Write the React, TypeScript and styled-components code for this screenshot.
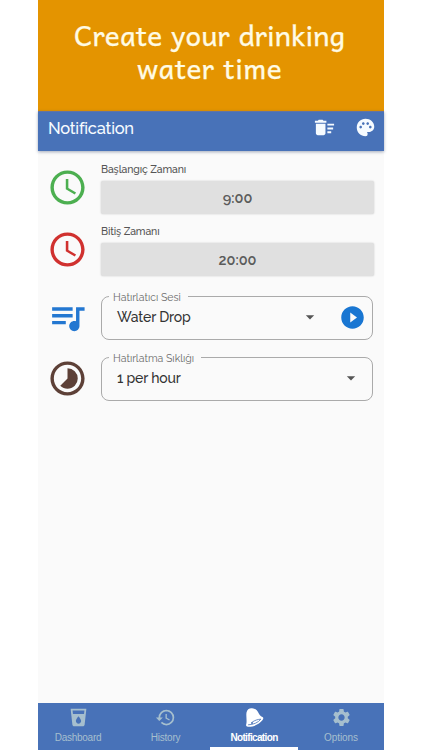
import React from "react";
import styled, { createGlobalStyle } from "styled-components";
import {
  MdAccessTime,
  MdArrowDropDown,
  MdDeleteSweep,
  MdHistory,
  MdLocalDrink,
  MdPalette,
  MdPlayCircleFilled,
  MdQueueMusic,
  MdSettings,
  MdTimelapse,
} from "react-icons/md";

const GlobalStyle = createGlobalStyle`
  * { box-sizing: border-box; }
  body { margin: 0; background: #fff; overflow: hidden; }
`;

const Phone = styled.div`
  width: 346px;
  height: 750px;
  margin-left: 38px;
  display: flex;
  flex-direction: column;
  background: #fafafa;
  font-family: Raleway, Lato, "Open Sans", sans-serif;
`;

const Banner = styled.h1`
  margin: 0;
  height: 111px;
  flex: none;
  padding: 18px 3px 0 0;
  background: #e49400;
  color: #fffbe4;
  font: 400 28px/33px Andika, "Noto Sans", sans-serif;
  -webkit-text-stroke: 0.25px #fffbe4;
  text-align: center;
  white-space: nowrap;
`;

const BannerLine = styled.span<{ $spacing: number }>`
  display: block;
  word-spacing: 1px;
  letter-spacing: ${(p) => p.$spacing}px;
`;

const AppBar = styled.header`
  height: 40px;
  flex: none;
  display: flex;
  align-items: center;
  padding: 0 8px 8px 10px;
  background: #4872b8;
  border-top: 1px solid #6674a0;
  box-shadow: 0 1px 3px rgba(30, 50, 90, 0.4);
  color: #f6fbff;
`;

const BarTitle = styled.h2`
  margin: 0;
  flex: 1;
  font-size: 16.5px;
  font-weight: 500;
  letter-spacing: -0.25px;
`;

const BarActions = styled.div`
  display: flex;
  gap: 19px;
  align-items: center;
`;

const Content = styled.main`
  flex: 1;
  padding: 12px 10px 0 12px;
`;

const Row = styled.div<{ $height: number }>`
  height: ${(p) => p.$height}px;
  display: grid;
  grid-template-columns: 51px 1fr;
`;

const RowIcon = styled.div<{ $color: string; $top: number }>`
  padding-top: ${(p) => p.$top}px;
  color: ${(p) => p.$color};
  margin-left: -3px;
  svg { display: block; }
`;

const Label = styled.label`
  display: block;
  height: 18px;
  line-height: 13px;
  font-size: 10.5px;
  font-weight: 500;
  letter-spacing: -0.12px;
  color: #555;
`;

const TimeButton = styled.button`
  width: 273px;
  height: 33px;
  border: 0;
  border-radius: 2px;
  padding: 0;
  background: #e0e0e0;
  box-shadow: 0 0 2px rgba(0, 0, 0, 0.2);
  color: #5b5b5b;
  font: 600 14.5px Raleway, Inter, sans-serif;
`;

const Field = styled.fieldset`
  width: 272px;
  height: 49px;
  margin: -4.5px 0 0;
  padding: 0 9px 0 15px;
  border: 1px solid #aaa;
  border-radius: 8px;
  min-width: 0;
`;

const Legend = styled.legend<{ $width: number }>`
  width: ${(p) => p.$width}px;
  margin-left: -8px;
  padding: 1px 4px 0;
  font-size: 10.5px;
  line-height: 11px;
  color: #6c6c6c;
  white-space: nowrap;
`;

const FieldValue = styled.div<{ $end: number }>`
  height: 29px;
  display: flex;
  align-items: center;
  padding-right: ${(p) => p.$end}px;
  font-size: 14px;
  font-weight: 500;
  letter-spacing: -0.15px;
  color: #333;
`;

const Value = styled.span`
  flex: 1;
`;

const Play = styled.span`
  display: flex;
  color: #1976d2;
  margin: 0 -3px 0 19px;
`;

const Nav = styled.nav`
  height: 47px;
  flex: none;
  display: grid;
  grid-template-columns: 80px 92px 88px 86px;
  background: #4872b8;
`;

const Tab = styled.a<{ $active?: boolean; $spacing: number; $shift?: number }>`
  height: 47px;
  display: flex;
  flex-direction: column;
  align-items: center;
  padding-top: 4px;
  padding-left: ${(p) => p.$shift ?? 0}px;
  color: ${(p) => (p.$active ? "#fff" : "#a6bfce")};
  border-bottom: ${(p) => (p.$active ? "3px solid #fff" : "0")};
  font: ${(p) => (p.$active ? 700 : 400)} 10px/14px "Liberation Sans", sans-serif;
  letter-spacing: ${(p) => p.$spacing}px;
  svg { flex: none; margin-bottom: 3px; }
`;

function BellIcon() {
  return (
    <svg width="21" height="21" viewBox="0 0 21 21">
      <path
        fill="#fff"
        d="M2.500 5.500C3 2.500 5.300 1 8 1.200c3.500.3 5.300 2.300 6.800 5.300 1 1.800 2.200 2.800 3.700 3.500 1.100.600 1 1.900.100 3.100-3 4-9 6.900-14.600 6.600-1.700-.2-2.300-1.500-1.700-2.700C3.100 13.500 1.900 9 2.500 5.500Z"
      />
      <path
        fill="none"
        stroke="#4872b8"
        strokeWidth="0.8"
        strokeLinecap="round"
        d="M4.500 17.800c4.500 0 9.800-2.200 12.300-5.600-3.300.100-6 1.200-8.300 2.700"
      />
      <circle cx="8" cy="16" r="1" fill="#4872b8" />
    </svg>
  );
}

export default function App() {
  return (
    <>
      <GlobalStyle />
      <Phone>
        <Banner>
          <BannerLine $spacing={0.1}>Create your drinking</BannerLine>
          <BannerLine $spacing={0.4}>water time</BannerLine>
        </Banner>
        <AppBar>
          <BarTitle>Notification</BarTitle>
          <BarActions>
            <MdDeleteSweep size={23} />
            <MdPalette size={21} />
          </BarActions>
        </AppBar>
        <Content>
          <Row $height={62}>
            <RowIcon $color="#4caf50" $top={4}><MdAccessTime size={41} /></RowIcon>
            <div>
              <Label>Başlangıç Zamanı</Label>
              <TimeButton>9:00</TimeButton>
            </div>
          </Row>
          <Row $height={70}>
            <RowIcon $color="#d0312f" $top={4}><MdAccessTime size={41} /></RowIcon>
            <div>
              <Label>Bitiş Zamanı</Label>
              <TimeButton>20:00</TimeButton>
            </div>
          </Row>
          <Row $height={61}>
            <RowIcon $color="#2377d1" $top={2}><MdQueueMusic size={41} /></RowIcon>
            <Field>
              <Legend $width={79}>Hatırlatıcı Sesi</Legend>
              <FieldValue $end={0}>
                <Value>Water Drop</Value>
                <MdArrowDropDown size={20} color="#555" />
                <Play><MdPlayCircleFilled size={27} /></Play>
              </FieldValue>
            </Field>
          </Row>
          <Row $height={61}>
            <RowIcon $color="#5d4037" $top={2}><MdTimelapse size={41} /></RowIcon>
            <Field>
              <Legend $width={92}>Hatırlatma Sıklığı</Legend>
              <FieldValue $end={2}>
                <Value>1 per hour</Value>
                <MdArrowDropDown size={20} color="#555" />
              </FieldValue>
            </Field>
          </Row>
        </Content>
        <Nav>
          <Tab $spacing={-0.25}><MdLocalDrink size={21} />Dashboard</Tab>
          <Tab $spacing={-0.2} $shift={3}><MdHistory size={21} />History</Tab>
          <Tab $active $spacing={-0.65}><BellIcon />Notification</Tab>
          <Tab $spacing={-0.1}><MdSettings size={21} />Options</Tab>
        </Nav>
      </Phone>
    </>
  );
}
